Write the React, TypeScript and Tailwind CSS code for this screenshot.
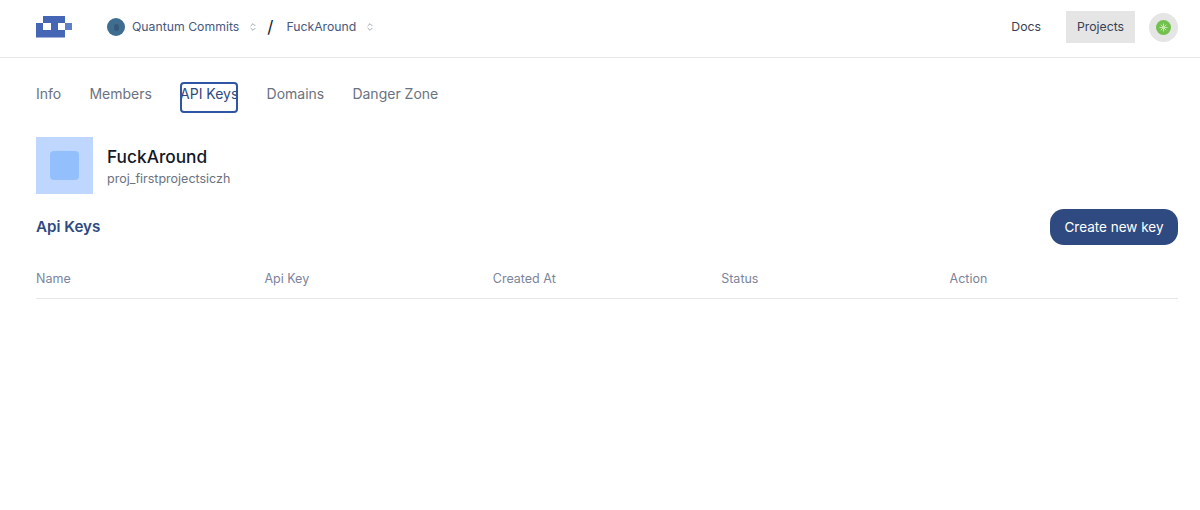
import { ChevronsUpDown } from "lucide-react";

const font = { fontFamily: "Inter, 'Liberation Sans', sans-serif" };
const tabs = ["Info", "Members", "API Keys", "Domains", "Danger Zone"];
const columns = ["Name", "Api Key", "Created At", "Status", "Action"];

function Logo() {
  return (
    <svg width="36" height="22" viewBox="0 0 36 22" className="shrink-0">
      <path d="M7 0H29V7H36V14H29V21.500H0V7H7Z" fill="#4565b5" />
      <rect x="7" y="7" width="8" height="7" fill="#fff" />
      <rect x="22" y="7" width="7" height="7" fill="#fff" />
      <rect x="29" y="7" width="7" height="7" fill="#5f7fc6" />
    </svg>
  );
}

function Crumb({ label }: { label: string }) {
  return (
    <div className="flex items-center gap-[9px]">
      <span className="text-[12.250px] text-[#48587f]">{label}</span>
      <ChevronsUpDown className="w-[10px] h-[10px] text-[#8b93a5]" strokeWidth={2} />
    </div>
  );
}

export default function App() {
  return (
    <div style={font} className="w-[1200px] h-[510px] bg-white overflow-hidden">
      <header className="h-[58px] border-b border-[#e5e7eb] pl-9 pr-[22px] pb-[3px] flex items-center">
        <Logo />
        <div className="ml-[35px] flex items-center">
          <div className="w-[18px] h-[18px] rounded-full bg-[#3f6d8f] mr-[7px] flex items-center justify-center">
            <div className="w-[5px] h-[7px] rounded-full bg-[#35597a]" />
          </div>
          <Crumb label="Quantum Commits" />
          <span className="ml-[9px] mr-[13px] text-[17px] leading-none text-[#111827]">/</span>
          <Crumb label="FuckAround" />
        </div>
        <div className="ml-auto flex items-center">
          <span className="text-[12.250px] text-[#374151] mr-[25px]">Docs</span>
          <div className="w-[69px] h-8 bg-[#e5e5e5] flex items-center justify-center text-[12.250px] text-[#374151] mr-[14px]">
            Projects
          </div>
          <div className="w-[29px] h-[29px] rounded-full bg-[#e5e5e5] flex items-center justify-center">
            <svg width="15" height="15" viewBox="0 0 15 15">
              <circle cx="7.500" cy="7.500" r="7.500" fill="#72c04e" />
              <path d="M7.500 3.500V11.500M3.500 7.500H11.500M4.700 4.700L10.300 10.300M10.300 4.700L4.700 10.300" stroke="#c5e8b0" strokeWidth="1" />
            </svg>
          </div>
        </div>
      </header>

      <main className="px-9 pr-[22px]">
        <nav className="flex items-start gap-[28.200px] pt-6">
          {tabs.map((t) => (
            <div
              key={t}
              className={
                t === "API Keys"
                  ? "h-[31px] pt-[3px] text-[14px] leading-[18px] text-[#2f4a80] whitespace-nowrap rounded-[4px] outline-2 -outline-offset-2 outline-[#2f55a4]"
                  : "h-[31px] pt-[3px] text-[14px] leading-[18px] text-[#6b7280] whitespace-nowrap"
              }
            >
              {t}
            </div>
          ))}
        </nav>

        <div className="flex items-center gap-[14px] mt-6">
          <div className="w-[57px] h-[57px] bg-[#bfd7fe] flex items-center justify-center">
            <div className="w-[29px] h-[29px] rounded-[4px] bg-[#93c0fd]" />
          </div>
          <div className="pt-px">
            <div className="text-[17.300px] leading-6 font-medium text-[#111827]">FuckAround</div>
            <div className="mt-px text-[12.5px] leading-[18px] text-[#6b7280]">proj_firstprojectsiczh</div>
          </div>
        </div>

        <div className="flex items-center justify-between mt-[15px]">
          <h2 className="text-[15.200px] font-semibold text-[#2f4a80]">Api Keys</h2>
          <button className="h-9 w-[128px] rounded-[14px] bg-[#2f4a80] text-white text-[13.500px]">Create new key</button>
        </div>

        <div className="grid grid-cols-5 h-[54px] pt-[15px] items-center border-b border-[#e5e7eb]">
          {columns.map((c) => (
            <div key={c} className="text-[12.5px] text-[#7c849b]">{c}</div>
          ))}
        </div>
      </main>
    </div>
  );
}
